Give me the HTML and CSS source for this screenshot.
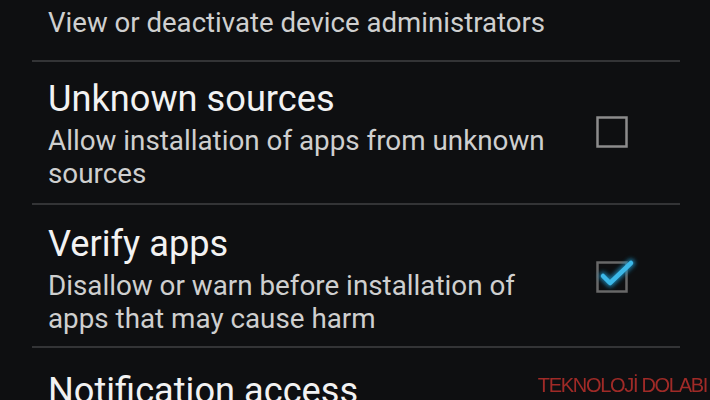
FILE: index.html
```html
<!DOCTYPE html>
<html>
<head>
<meta charset="utf-8">
<link rel="stylesheet" href="styles.css">
</head>
<body>
<div class="list">
  <div class="pref pref-top">
    <div class="summary">View or deactivate device administrators</div>
  </div>
  <div class="pref">
    <div class="text">
      <div class="title">Unknown sources</div>
      <div class="summary">Allow installation of apps from unknown sources</div>
    </div>
    <svg class="check" viewBox="0 0 44 44" width="44" height="44">
      <rect x="7.5" y="7.5" width="29" height="29" fill="none" stroke="#8c8c8c" stroke-width="2.5"/>
    </svg>
  </div>
  <div class="pref pref-verify">
    <div class="text">
      <div class="title">Verify apps</div>
      <div class="summary">Disallow or warn before installation of apps that may cause harm</div>
    </div>
    <svg class="check" viewBox="0 0 44 44" width="44" height="44">
      <defs>
        <filter id="glow" x="-50%" y="-50%" width="200%" height="200%">
          <feGaussianBlur stdDeviation="2.2"/>
        </filter>
      </defs>
      <rect x="7.5" y="7.5" width="29" height="29" fill="none" stroke="#686868" stroke-width="2.5"/>
      <polyline points="13,21 20,28 41,8" fill="none" stroke="#1a8fc0" stroke-width="8" stroke-linecap="round" stroke-linejoin="round" filter="url(#glow)" opacity="0.8"/>
      <polyline points="13,21 20,28 41,8" fill="none" stroke="#3cb8e8" stroke-width="4.5" stroke-linecap="round" stroke-linejoin="round"/>
    </svg>
  </div>
  <div class="pref pref-last">
    <div class="text">
      <div class="title">Notification access</div>
    </div>
  </div>
</div>
<div class="watermark">TEKNOLOJİ DOLABI</div>
</body>
</html>
```

FILE: styles.css
```css
html, body {
  margin: 0;
  padding: 0;
  height: 100%;
  overflow: hidden;
}
body {
  background: #0e0f11;
  font-family: Roboto, "Open Sans", sans-serif;
  position: relative;
}
.list {
  margin-left: 32px;
  width: 648px;
}
.pref {
  display: flex;
  align-items: center;
  border-top: 2px solid #333436;
  padding: 17px 46px 13px 16px;
}
.pref-top {
  border-top: none;
  padding-top: 6px;
  padding-bottom: 21px;
}
.pref-verify {
  padding-top: 19px;
  padding-bottom: 11px;
}
.pref-last {
  padding-top: 23px;
}
.text {
  flex: 1;
}
.title {
  color: #f2f2f2;
  font-size: 36.2px;
  line-height: 40px;
}
.summary {
  color: #cfcfcf;
  font-size: 27.8px;
  line-height: 33px;
  margin-top: 5px;
  padding-right: 40px;
}
.pref-top .summary {
  margin-top: 0;
  font-size: 27.6px;
}
.check {
  flex: none;
  overflow: visible;
  margin-bottom: 6px;
}
.watermark {
  position: absolute;
  right: 3px;
  bottom: 3px;
  color: #b02e2a;
  font-family: "Liberation Sans", Arial, sans-serif;
  font-size: 20px;
  letter-spacing: -1.3px;
  opacity: 0.9;
}
```
